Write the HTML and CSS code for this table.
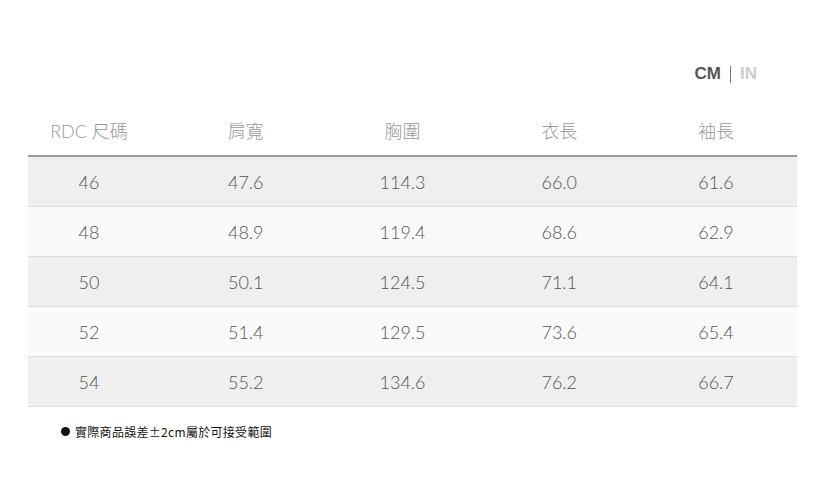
FILE: index.html
```html
<!DOCTYPE html>
<html lang="zh-Hant">
<head>
<meta charset="utf-8">
<title>尺寸表</title>
<link rel="stylesheet" href="styles.css">
</head>
<body>
<div class="page">
  <div class="units">
    <span class="unit active">CM</span>
    <span class="sep"></span>
    <span class="unit">IN</span>
  </div>
  <div class="table">
    <div class="row head">
      <div class="cells">
        <div class="cell">RDC 尺碼</div>
        <div class="cell">肩寬</div>
        <div class="cell">胸圍</div>
        <div class="cell">衣長</div>
        <div class="cell">袖長</div>
      </div>
    </div>
    <div class="row odd">
      <div class="cells">
        <div class="cell">46</div><div class="cell">47.6</div><div class="cell">114.3</div><div class="cell">66.0</div><div class="cell">61.6</div>
      </div>
    </div>
    <div class="row even">
      <div class="cells">
        <div class="cell">48</div><div class="cell">48.9</div><div class="cell">119.4</div><div class="cell">68.6</div><div class="cell">62.9</div>
      </div>
    </div>
    <div class="row odd">
      <div class="cells">
        <div class="cell">50</div><div class="cell">50.1</div><div class="cell">124.5</div><div class="cell">71.1</div><div class="cell">64.1</div>
      </div>
    </div>
    <div class="row even">
      <div class="cells">
        <div class="cell">52</div><div class="cell">51.4</div><div class="cell">129.5</div><div class="cell">73.6</div><div class="cell">65.4</div>
      </div>
    </div>
    <div class="row odd">
      <div class="cells">
        <div class="cell">54</div><div class="cell">55.2</div><div class="cell">134.6</div><div class="cell">76.2</div><div class="cell">66.7</div>
      </div>
    </div>
  </div>
  <p class="note"><span class="dot"></span>實際商品誤差±2cm屬於可接受範圍</p>
</div>
</body>
</html>
```
FILE: styles.css
```css
* { box-sizing: border-box; }
html, body { margin: 0; padding: 0; background: #ffffff; }
body { font-family: Lato, "Noto Sans CJK TC", sans-serif; }

.page {
  width: 825px;
  height: 500px;
  padding: 62px 28px 0 28px;
}

.units {
  display: flex;
  justify-content: flex-end;
  align-items: center;
  gap: 9px;
  padding-right: 40px;
  height: 24px;
  font-family: "Liberation Sans", Arial, sans-serif;
  font-weight: bold;
  font-size: 17px;
}
.unit { color: #cccccc; }
.unit.active { color: #555555; }
.sep {
  width: 1px;
  height: 17px;
  background: #777777;
}

.table { margin-top: 20px; width: 769px; }

.row { overflow: visible; }
.cells {
  display: grid;
  grid-template-columns: repeat(5, 156.75px);
  margin-left: -17.4px;
  height: 100%;
  align-items: center;
}
.cell {
  text-align: center;
  font-size: 18px;
  font-weight: 300;
  color: #555555;
}

.head { height: 51px; border-bottom: 2px solid #9a9a9a; }
.head .cell {
  color: #999999;
  font-size: 18px;
  padding-bottom: 2px;
  font-family: Lato, "Noto Sans CJK TC", sans-serif;
}
.odd, .even { height: 50px; border-bottom: 1px solid #dddddd; }
.odd { background: #efefef; }
.even { background: #fafafa; }

.note {
  margin: 16px 0 0 33px;
  display: flex;
  align-items: center;
  gap: 5px;
  font-family: "Noto Sans CJK TC", "Liberation Sans", sans-serif;
  font-size: 12px;
  letter-spacing: 0.3px;
  color: #111111;
}
.dot {
  width: 9px;
  height: 9px;
  border-radius: 50%;
  background: #111111;
}
```
